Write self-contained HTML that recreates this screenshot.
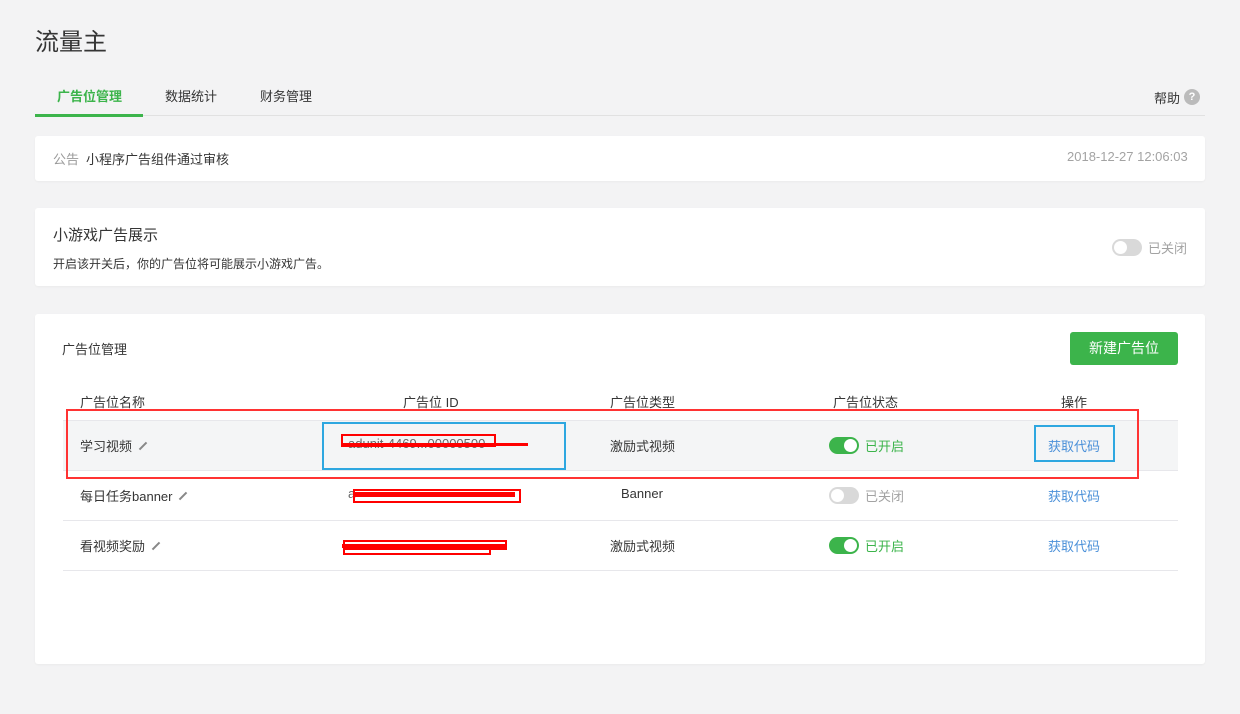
<!DOCTYPE html>
<html><head><meta charset="utf-8"><style>
*{margin:0;padding:0;box-sizing:border-box}
body{width:1240px;height:714px;background:#f3f3f4;font-family:"Liberation Sans","Noto Sans CJK SC",sans-serif;color:#353535;position:relative;overflow:hidden;font-size:13px}
.a{position:absolute;white-space:nowrap}
.card{position:absolute;left:35px;width:1170px;background:#fff;border-radius:3px;box-shadow:0 1px 2px rgba(0,0,0,.04)}
.line{position:absolute;left:63px;width:1115px;height:1px;background:#e7e7eb}
.sw{position:absolute;width:30px;height:17px;border-radius:9px}
.sw i{position:absolute;top:2px;width:13px;height:13px;border-radius:50%;background:#fff}
.on{background:#3cb44b}.on i{right:2px}
.off{background:#d9d9d9}.off i{left:2px}
.pen{display:inline-block;width:10px;height:2px;background:#888;transform:rotate(-45deg);margin-left:6px;vertical-align:middle;position:relative;top:-2px}
.link{color:#4a90d9}
.red{position:absolute;background:#f00;height:3px}
.rbox{position:absolute;border:2px solid #f00}
</style></head><body>
<div class="a" style="left:35px;top:22px;font-size:24px;color:#353535">流量主</div>
<div class="a" style="left:57px;top:86px;font-size:13px;color:#3cb44b;font-weight:bold">广告位管理</div>
<div class="a" style="left:165px;top:86px">数据统计</div>
<div class="a" style="left:260px;top:86px">财务管理</div>
<div class="a" style="left:1154px;top:88px">帮助</div>
<div class="a" style="left:1184px;top:89px;width:16px;height:16px;border-radius:50%;background:#bbb;color:#fff;font-size:11px;text-align:center;line-height:16px;font-weight:bold">?</div>
<div class="a" style="left:35px;top:115px;width:1170px;height:1px;background:#e1e1e1"></div>
<div class="a" style="left:35px;top:114px;width:108px;height:3px;background:#3cb44b"></div>

<div class="card" style="top:136px;height:45px"></div>
<div class="a" style="left:53px;top:149px;color:#9a9a9a">公告</div>
<div class="a" style="left:86px;top:149px">小程序广告组件通过审核</div>
<div class="a" style="left:1067px;top:149px;color:#a3a3a3">2018-12-27 12:06:03</div>

<div class="card" style="top:208px;height:78px"></div>
<div class="a" style="left:53px;top:224px;font-size:15px">小游戏广告展示</div>
<div class="a" style="left:53px;top:255px;font-size:12px">开启该开关后，你的广告位将可能展示小游戏广告。</div>
<div class="sw off" style="left:1112px;top:239px"><i></i></div>
<div class="a" style="left:1148px;top:238px;color:#a3a3a3">已关闭</div>

<div class="card" style="top:314px;height:350px"></div>
<div class="a" style="left:62px;top:339px">广告位管理</div>
<div class="a" style="left:1070px;top:332px;width:108px;height:33px;background:#3cb44b;border-radius:3px;color:#fff;font-size:14px;text-align:center;line-height:32px">新建广告位</div>

<div class="a" style="left:80px;top:392px">广告位名称</div>
<div class="a" style="left:403px;top:392px">广告位 ID</div>
<div class="a" style="left:610px;top:392px">广告位类型</div>
<div class="a" style="left:833px;top:392px">广告位状态</div>
<div class="a" style="left:1061px;top:392px">操作</div>

<div class="a" style="left:63px;top:420px;width:1115px;height:50px;background:#f4f5f6"></div>
<div class="line" style="top:420px"></div>
<div class="line" style="top:470px"></div>
<div class="line" style="top:520px"></div>
<div class="line" style="top:570px"></div>

<div class="a" style="left:80px;top:436px">学习视频<span class="pen"></span></div>
<div class="a" style="left:80px;top:486px">每日任务banner<span class="pen"></span></div>
<div class="a" style="left:80px;top:536px">看视频奖励<span class="pen"></span></div>

<div class="a" style="left:348px;top:436px;color:#666">adunit-4469...00000500</div>
<div class="a" style="left:348px;top:486px;color:#666">a</div>
<div class="red" style="left:343px;top:443px;width:185px"></div>
<div class="rbox" style="left:341px;top:434px;width:155px;height:13px"></div>
<div class="red" style="left:355px;top:492px;width:160px;height:5px"></div>
<div class="rbox" style="left:353px;top:489px;width:168px;height:14px"></div>
<div class="red" style="left:342px;top:544px;width:165px;height:4px"></div>
<div class="rbox" style="left:343px;top:540px;width:164px;height:10px"></div>
<div class="rbox" style="left:343px;top:548px;width:148px;height:7px"></div>

<div class="a" style="left:610px;top:436px">激励式视频</div>
<div class="a" style="left:621px;top:486px">Banner</div>
<div class="a" style="left:610px;top:536px">激励式视频</div>

<div class="sw on" style="left:829px;top:437px"><i></i></div>
<div class="a" style="left:865px;top:436px;color:#3cb44b">已开启</div>
<div class="sw off" style="left:829px;top:487px"><i></i></div>
<div class="a" style="left:865px;top:486px;color:#a3a3a3">已关闭</div>
<div class="sw on" style="left:829px;top:537px"><i></i></div>
<div class="a" style="left:865px;top:536px;color:#3cb44b">已开启</div>

<div class="a link" style="left:1048px;top:436px">获取代码</div>
<div class="a link" style="left:1048px;top:486px">获取代码</div>
<div class="a link" style="left:1048px;top:536px">获取代码</div>

<div class="a" style="left:66px;top:409px;width:1073px;height:70px;border:2px solid #f33"></div>
<div class="a" style="left:322px;top:422px;width:244px;height:48px;border:2px solid #2ea7e0"></div>
<div class="a" style="left:1034px;top:425px;width:81px;height:37px;border:2px solid #2ea7e0"></div>
</body></html>
